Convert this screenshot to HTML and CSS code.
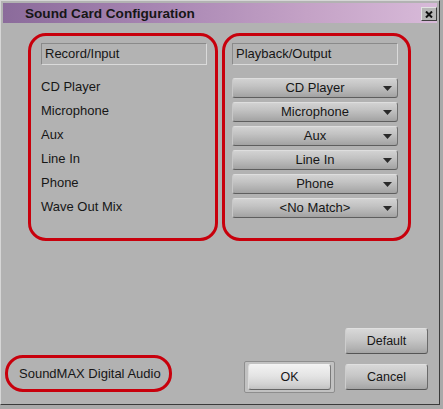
FILE: index.html
```html
<!DOCTYPE html>
<html>
<head>
<meta charset="utf-8">
<link rel="stylesheet" href="styles.css">
</head>
<body>
<div class="window">
  <div class="titlebar">
    <span class="title">Sound Card Configuration</span>
    <button class="close" aria-label="Close"><svg width="8" height="7" viewBox="0 0 8 7"><path d="M1 0.5 L7 6.5 M7 0.5 L1 6.5" stroke="#111" stroke-width="2"/></svg></button>
  </div>
  <div class="content">
    <div class="columns">
      <section class="group group-in">
        <div class="header">Record/Input</div>
        <ul class="rows">
          <li class="label">CD Player</li>
          <li class="label">Microphone</li>
          <li class="label">Aux</li>
          <li class="label">Line In</li>
          <li class="label">Phone</li>
          <li class="label">Wave Out Mix</li>
        </ul>
      </section>
      <section class="group group-out">
        <div class="header">Playback/Output</div>
        <div class="rows rows-out">
          <div class="select"><span class="value">CD Player</span><svg class="arrow" width="9" height="5" viewBox="0 0 9 5"><path d="M0 0 H9 L4.5 5 Z" fill="#2a2a2a"/></svg></div>
          <div class="select"><span class="value">Microphone</span><svg class="arrow" width="9" height="5" viewBox="0 0 9 5"><path d="M0 0 H9 L4.5 5 Z" fill="#2a2a2a"/></svg></div>
          <div class="select"><span class="value">Aux</span><svg class="arrow" width="9" height="5" viewBox="0 0 9 5"><path d="M0 0 H9 L4.5 5 Z" fill="#2a2a2a"/></svg></div>
          <div class="select"><span class="value">Line In</span><svg class="arrow" width="9" height="5" viewBox="0 0 9 5"><path d="M0 0 H9 L4.5 5 Z" fill="#2a2a2a"/></svg></div>
          <div class="select"><span class="value">Phone</span><svg class="arrow" width="9" height="5" viewBox="0 0 9 5"><path d="M0 0 H9 L4.5 5 Z" fill="#2a2a2a"/></svg></div>
          <div class="select"><span class="value">&lt;No Match&gt;</span><svg class="arrow" width="9" height="5" viewBox="0 0 9 5"><path d="M0 0 H9 L4.5 5 Z" fill="#2a2a2a"/></svg></div>
        </div>
      </section>
    </div>
    <div class="footer">
      <div class="device">SoundMAX Digital Audio</div>
      <div class="actions">
        <button class="btn">Default</button>
        <div class="actions-row">
          <div class="default-frame"><button class="btn btn-default">OK</button></div>
          <button class="btn">Cancel</button>
        </div>
      </div>
    </div>
  </div>
</div>
</body>
</html>
```
FILE: styles.css
```css
html, body {
  margin: 0;
  padding: 0;
}
body {
  background: #a9a9a9;
  width: 443px;
  height: 409px;
  font-family: "Liberation Sans", Arial, sans-serif;
  font-size: 13px;
  color: #161616;
}
.window {
  box-sizing: border-box;
  width: 440px;
  height: 405px;
  background: #b2b2b2;
  border: 1px solid;
  border-color: #d6d6d6 #3a3a3a #3a3a3a #d6d6d6;
  padding: 2px;
  display: flex;
  flex-direction: column;
}
.titlebar {
  height: 20px;
  flex: none;
  display: flex;
  align-items: center;
  justify-content: space-between;
  background: linear-gradient(to right, #8b6b9b 0%, #a785b2 35%, #c4a2c6 70%, #d8bad9 100%);
}
.title {
  font-weight: bold;
  font-size: 13.6px;
  color: #161616;
  padding-left: 22px;
}
.close {
  box-sizing: border-box;
  width: 16px;
  height: 14px;
  margin-top: 2px;
  padding: 0;
  display: flex;
  align-items: center;
  justify-content: center;
  background: #b6b6b6;
  border: 1px solid;
  border-color: #e2e2e2 #3e3e3e #3e3e3e #e2e2e2;
}
.content {
  flex: 1;
  display: flex;
  flex-direction: column;
}
.columns {
  display: flex;
  gap: 4px;
  margin-top: 10px;
  padding-left: 25px;
}
.group {
  box-sizing: border-box;
  height: 208px;
  border: 3px solid #c8000c;
  border-radius: 18px;
  padding: 7px 0 0 10px;
}
.group-in { width: 190px; }
.group-out { width: 189px; padding-left: 7px; }
.header {
  box-sizing: border-box;
  width: 166px;
  height: 22px;
  line-height: 20px;
  padding-left: 3px;
  border: 1px solid;
  border-color: #8a8a8a #dadada #dadada #8a8a8a;
  background: #b3b3b3;
}
.rows {
  list-style: none;
  margin: 12px 0 0;
  padding: 0;
  display: flex;
  flex-direction: column;
  gap: 4px;
}
.rows-out { margin-top: 13px; }
.label {
  height: 20px;
  line-height: 20px;
}
.select {
  box-sizing: border-box;
  width: 166px;
  height: 20px;
  display: grid;
  align-items: center;
  border-radius: 3px;
  border: 1px solid;
  border-color: #dedede #707070 #5e5e5e #c8c8c8;
  background: linear-gradient(#d2d2d2 0%, #c2c2c2 40%, #b0b0b0 75%, #a2a2a2 100%);
}
.value, .arrow {
  grid-area: 1 / 1;
}
.value {
  text-align: center;
  line-height: 18px;
}
.arrow {
  justify-self: end;
  margin-right: 5px;
  margin-top: 1px;
}
.footer {
  margin-top: auto;
  display: flex;
  justify-content: space-between;
  align-items: flex-end;
  padding: 0 9px 9px 2px;
}
.device {
  box-sizing: border-box;
  width: 167px;
  height: 37px;
  border: 3px solid #c8000c;
  border-radius: 18px;
  padding-left: 11px;
  display: flex;
  align-items: center;
  margin-bottom: 1px;
}
.actions {
  display: flex;
  flex-direction: column;
  align-items: flex-end;
  gap: 7px;
}
.actions-row {
  display: flex;
  align-items: center;
  gap: 10px;
}
.btn {
  box-sizing: border-box;
  width: 83px;
  height: 26px;
  padding: 0;
  font-family: "Liberation Sans", Arial, sans-serif;
  font-size: 12.5px;
  color: #161616;
  border-radius: 3px;
  border: 1px solid;
  border-color: #e0e0e0 #6a6a6a #555555 #cdcdcd;
  background: linear-gradient(#d8d8d8 0%, #c6c6c6 45%, #b2b2b2 80%, #a4a4a4 100%);
}
.default-frame {
  box-sizing: border-box;
  width: 91px;
  height: 32px;
  padding: 2px 3px;
  border: 1px solid #8e8e8e;
  border-radius: 2px;
  background: #c2c2c2;
}
.btn-default {
  background: linear-gradient(#f2f2f2 0%, #e4e4e4 45%, #d2d2d2 80%, #c2c2c2 100%);
  border-color: #f4f4f4 #7a7a7a #666666 #dcdcdc;
}
```
